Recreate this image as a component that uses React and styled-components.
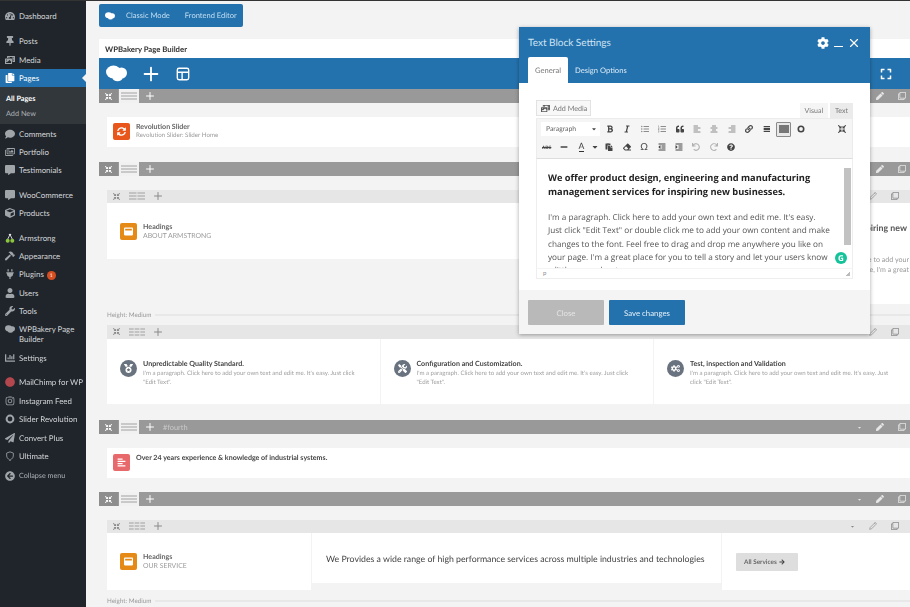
import React from "react";
import styled, { createGlobalStyle } from "styled-components";
import {
  FaTachometerAlt, FaThumbtack, FaPhotoVideo, FaCopy, FaComment, FaRegImages, FaCommentAlt,
  FaCube, FaHammer, FaPlug, FaUser, FaWrench, FaInstagram, FaPaperPlane, FaCircle,
  FaArrowCircleLeft, FaBold, FaItalic, FaListUl, FaListOl, FaQuoteLeft, FaAlignLeft,
  FaAlignCenter, FaAlignRight, FaLink, FaMinus, FaPaste, FaEraser, FaIndent,
  FaOutdent, FaUndo, FaRedo, FaQuestionCircle, FaCog, FaExpand, FaCaretDown,
  FaPen, FaRegClone, FaSyncAlt, FaMedal, FaTools, FaCogs, FaArrowRight,
  FaCompressArrowsAlt, FaWindowMaximize, FaChartBar
} from "react-icons/fa";
import { FiPlus, FiX, FiEdit2, FiShield } from "react-icons/fi";
import { MdViewDay } from "react-icons/md";

const GlobalStyle = createGlobalStyle`
  html, body { margin: 0; padding: 0; height: 607px; overflow: hidden; background: #f3f3f3; }
  body { font-family: Lato, "Open Sans", "Liberation Sans", sans-serif; color: #444; text-rendering: geometricPrecision; }
  * { box-sizing: border-box; }
`;

const Page = styled.div`
  position: relative;
  width: 910px;
  height: 607px;
  display: flex;
  overflow: hidden;
  border-top: 1px solid #333;
  filter: blur(0.25px);
`;

const Sidebar = styled.nav`
  width: 86px;
  flex: none;
  background: #20252b;
  padding-top: 5.8px;
`;

const MenuGroup = styled.div`
  margin-bottom: ${(p) => p.$mb || 6}px;
`;

const MenuItem = styled.div`
  position: relative;
  display: flex;
  align-items: ${(p) => (p.$tall ? "flex-start" : "center")};
  gap: 4px;
  min-height: ${(p) => (p.$tall ? 28.6 : 18.4)}px;
  margin-top: ${(p) => (p.$small ? 2 : 0)}px;
  padding: ${(p) => (p.$tall ? "4px 2px 0 5px" : "0 2px 0 5px")};
  font-size: ${(p) => (p.$small ? 7.2 : 7.9)}px;
  line-height: 10px;
  white-space: ${(p) => (p.$tall ? "normal" : "nowrap")};
  color: ${(p) => (p.$active ? "#fff" : p.$small ? "#aab0b5" : "#d3d6d9")};
  background: ${(p) => (p.$active ? "#2271ae" : "transparent")};
  svg { flex: none; width: 10px; height: 10px; color: ${(p) => (p.$active ? "#fff" : p.$tint || "#a0a5aa")}; }
`;

const ActiveArrow = styled.span`
  position: absolute;
  right: 0;
  top: 5px;
  border: 4.5px solid transparent;
  border-right-color: #f3f3f3;
  border-left: 0;
`;

const SubMenu = styled.div`
  height: 37px;
  background: #32373c;
  padding: 4px 6px 0;
`;

const SubItem = styled.div`
  font-size: 7.3px;
  line-height: 15px;
  font-weight: ${(p) => (p.$active ? 700 : 400)};
  color: ${(p) => (p.$active ? "#fff" : "#aab0b5")};
`;

const Badge = styled.span`
  display: inline-flex;
  align-items: center;
  justify-content: center;
  width: 9px;
  height: 9px;
  margin-left: 3px;
  border-radius: 50%;
  background: #d54e21;
  color: #fff;
  font-size: 5px;
`;

const Main = styled.main`
  flex: 1;
  min-width: 0;
  padding: 3px 0 0 13px;
`;

const ModeBar = styled.div`
  display: flex;
  align-items: center;
  width: 144px;
  height: 23px;
  padding-left: 6px;
  background: #2472ad;
  border-radius: 2px;
  color: #c4dff3;
  font-size: 7.55px;
  svg { color: #fff; width: 10px; height: 8px; margin-right: 11px; }
  span + span { margin-left: 15px; }
`;

const BuilderTitle = styled.div`
  margin-top: 12px;
  height: 19px;
  padding-left: 6px;
  display: flex;
  align-items: center;
  background: #fff;
  color: #333;
  font-size: 7.75px;
  font-weight: 700;
`;

const BuilderNav = styled.div`
  height: 31px;
  padding: 0 18px 0 7px;
  display: flex;
  align-items: center;
  background: #2472ad;
  color: #fff;
`;

const NavAdd = styled(FiPlus)`
  width: 22px;
  height: 22px;
  margin-left: 13px;
`;

const NavLayout = styled.svg`
  width: 14px;
  height: 14px;
  margin-left: 14px;
`;

const NavExpand = styled(FaExpand)`
  width: 12px;
  height: 12px;
  margin-left: auto;
`;

const Row = styled.section`
  padding-bottom: ${(p) => p.$pb}px;
`;

const RowHead = styled.div`
  height: ${(p) => (p.$inner ? 13.5 : 14)}px;
  display: flex;
  align-items: center;
  background: ${(p) => (p.$inner ? "#e6e6e6" : "#999")};
  color: ${(p) => (p.$inner ? "#8a8a8a" : "#fff")};
  font-size: 7.4px;
`;

const HeadMove = styled.span`
  width: 19px;
  height: 100%;
  display: flex;
  align-items: center;
  justify-content: center;
  background: ${(p) => (p.$inner ? "transparent" : "#8d8d8d")};
  svg { width: 7px; height: 7px; }
`;

const HeadLayout = styled.span`
  width: 20px;
  margin-left: 1px;
  height: 100%;
  display: flex;
  align-items: center;
  justify-content: center;
  background: ${(p) => (p.$inner ? "transparent" : "#f1f1f1")};
  color: #999;
`;

const LinesIcon = styled.svg`
  width: 16px;
  height: 8px;
`;

const HeadPlus = styled(FiPlus)`
  width: 12px;
  height: 12px;
  margin-left: 5px;
`;

const HeadTag = styled.span`
  margin-left: 7px;
  color: #c9c9c9;
`;

const HeadTools = styled.span`
  margin-left: auto;
  padding-right: ${(p) => (p.$inner ? 11 : 4)}px;
  display: flex;
  align-items: center;
  gap: 14px;
  color: ${(p) => (p.$inner ? "#8a8a8a" : "#e6e6e6")};
  svg { width: 8px; height: 8px; }
  svg:first-child { width: 5px; height: 5px; }
`;

const RowBody = styled.div`
  padding: 13.5px 0 0 8px;
`;

const Card = styled.div`
  display: flex;
  align-items: center;
  gap: 6px;
  height: 30px;
  padding-left: 6px;
  background: #fff;
`;

const IconTile = styled.span`
  flex: none;
  width: 17px;
  height: 17px;
  display: flex;
  align-items: center;
  justify-content: center;
  border-radius: 2px;
  background: ${(p) => p.$bg};
  color: #fff;
  svg { width: 9px; height: 9px; }
`;

const CardTitle = styled.div`
  font-size: 7.1px;
  line-height: 8.5px;
  font-weight: 700;
  white-space: nowrap;
  color: ${(p) => (p.$dark ? "#444" : "#666")};
`;

const CardSub = styled.div`
  font-size: ${(p) => p.$size || 6.2}px;
  line-height: 8.5px;
  color: #9a9a9a;
`;

const LongTitle = styled(CardTitle)`
  margin-bottom: 8px;
`;

const InnerRow = styled.div`
  margin-left: 8px;
`;

const InnerBody = styled.div`
  display: flex;
  gap: 1px;
  align-items: flex-start;
`;

const Cell = styled.div`
  width: ${(p) => p.$w}px;
  flex: ${(p) => (p.$w ? "none" : 1)};
  height: ${(p) => p.$h}px;
  background: #fff;
  display: flex;
  gap: 6px;
  padding: ${(p) => p.$pad || "20px 13px 0"};
`;

const Round = styled.span`
  flex: none;
  width: 17px;
  height: 17px;
  margin-top: 6px;
  display: flex;
  align-items: center;
  justify-content: center;
  border-radius: 50%;
  background: #69727f;
  color: #fff;
  svg { width: 9px; height: 9px; }
`;

const Feature = styled.div`
  padding-top: 6px;
  width: 213px;
`;

const FeatureText = styled.div`
  margin-top: 1px;
  font-size: 6.1px;
  line-height: 9px;
  color: #a0a0a0;
`;

const CellLead = styled.div`
  font-size: 8.75px;
  line-height: 12px;
  color: #444;
  white-space: nowrap;
`;

const HiddenCol = styled.div`
  margin-left: auto;
  padding-top: 19px;
  text-align: right;
  white-space: nowrap;
`;

const HiddenHead = styled.div`
  padding-right: 2px;
  font-size: 8.8px;
  font-weight: 700;
  color: #555;
`;

const HiddenText = styled.div`
  margin-top: 22px;
  font-size: 7.1px;
  line-height: 10px;
  color: #999;
`;

const GreyButton = styled.span`
  display: flex;
  align-items: center;
  gap: 2px;
  width: 62px;
  height: 18px;
  padding-left: 8px;
  background: #dedede;
  border-radius: 1px;
  color: #666;
  font-size: 6.4px;
  font-weight: 700;
  svg { width: 6px; height: 6px; color: #444; }
`;

const HeightBar = styled.div`
  display: flex;
  align-items: center;
  gap: 3px;
  height: 10px;
  margin-top: ${(p) => p.$mt}px;
  color: #999;
  font-size: 6.3px;
  &::after { content: ""; flex: 1; height: 2px; background: #e8e8e8; }
`;

const Modal = styled.div`
  position: absolute;
  left: 519px;
  top: 26px;
  width: 351px;
  height: 307px;
  background: #fff;
  box-shadow: 0 1px 4px rgba(0, 0, 0, 0.35);
`;

const ModalHead = styled.div`
  height: 30px;
  padding: 1px 9px 0;
  display: flex;
  align-items: center;
  background: #2472ad;
  color: #cfe3f3;
  font-size: 10px;
`;

const ModalTools = styled.div`
  margin-left: auto;
  display: flex;
  align-items: center;
  gap: 4.5px;
  color: #fff;
  svg:first-child { width: 12px; height: 12px; }
`;

const CloseIcon = styled(FiX)`
  width: 14px;
  height: 14px;
`;

const Minimize = styled.span`
  width: 9px;
  height: 1.5px;
  margin-top: 8px;
  background: #fff;
`;

const ModalTabs = styled.div`
  height: 26px;
  padding-left: 9px;
  display: flex;
  align-items: flex-end;
  background: #2472ad;
`;

const Tab = styled.div`
  width: ${(p) => (p.$active ? "40px" : "auto")};
  height: 26px;
  padding: 0 7px;
  display: flex;
  align-items: center;
  border-radius: 2px 2px 0 0;
  background: ${(p) => (p.$active ? "#fff" : "transparent")};
  color: ${(p) => (p.$active ? "#777" : "#dcebf6")};
  font-size: 7.6px;
`;

const ModalBody = styled.div`
  height: 207px;
  padding: 0 17px;
`;

const EditorTop = styled.div`
  height: 35px;
  display: flex;
  align-items: flex-end;
  justify-content: space-between;
`;

const AddMedia = styled.span`
  display: flex;
  align-items: center;
  gap: 3px;
  width: 55px;
  height: 16px;
  margin-bottom: 2px;
  padding-left: 4px;
  border: 1px solid #e2e2e2;
  background: #f8f8f8;
  color: #777;
  font-size: 7.2px;
  svg { width: 9px; height: 9px; color: #555; }
`;

const ViewTabs = styled.div`
  display: flex;
  gap: 2px;
`;

const ViewTab = styled.span`
  height: 15px;
  padding: 0 5px;
  display: flex;
  align-items: center;
  background: ${(p) => (p.$active ? "#ebebeb" : "#f5f5f5")};
  color: #777;
  font-size: 7px;
`;

const Toolbar = styled.div`
  height: 41px;
  padding: 1px 1px 0;
  background: #f5f5f5;
  border: 1px solid #ececec;
  border-bottom-color: #ddd;
`;

const ToolLine = styled.div`
  height: 18px;
  display: flex;
  align-items: center;
`;

const FormatSelect = styled.span`
  width: 59px;
  height: 14px;
  margin: 0 1.3px 0 3px;
  padding: 0 3px 0 5px;
  display: flex;
  align-items: center;
  justify-content: space-between;
  background: #fff;
  color: #666;
  font-size: 6.8px;
  svg { width: 6px; height: 6px; color: #444; }
`;

const ToolButton = styled.span`
  width: ${(p) => p.$w || 17.4}px;
  height: 15px;
  flex: none;
  display: flex;
  align-items: center;
  justify-content: center;
  font-size: 9.5px;
  color: ${(p) => (p.$muted ? "#b0b0b0" : p.$soft ? "#8c8c8c" : "#444")};
  margin-left: ${(p) => (p.$push ? "auto" : 0)};
  svg { width: 8px; height: 8px; }
`;

const PressedButton = styled.span`
  width: 15px;
  height: 15px;
  margin: 0 1.2px;
  flex: none;
  display: flex;
  align-items: center;
  justify-content: center;
  border: 1px solid #8a8a8a;
  border-radius: 1px;
  background: #e8e8e8;
  &::before { content: ""; width: 10px; height: 8px; background: #777; }
`;

const StrikeLabel = styled.span`
  font-size: 4.6px;
  font-weight: 700;
  text-decoration: line-through;
`;

const ColorA = styled.span`
  font-size: 8.6px;
  line-height: 9px;
  border-bottom: 1.5px solid #333;
`;

const RingIcon = styled.svg`
  fill: none;
  stroke: currentColor;
  stroke-width: 2;
`;

const Editor = styled.div`
  position: relative;
  height: 109px;
  padding: 12px 22px 0 11px;
  overflow: hidden;
  border-left: 1px solid #eee;
  border-right: 1px solid #eee;
  background: #fff;
  font-family: "Open Sans", "Liberation Sans", sans-serif;
`;

const EditorLead = styled.div`
  font-size: 9.25px;
  line-height: 13.5px;
  font-weight: 700;
  color: #222;
`;

const EditorText = styled.div`
  margin-top: 13px;
  font-size: 8.2px;
  line-height: 13.3px;
  color: #555;
`;

const ScrollThumb = styled.span`
  position: absolute;
  right: 1px;
  top: 9px;
  width: 7px;
  height: 77px;
  background: #c2c2c2;
`;

const Grammarly = styled.span`
  position: absolute;
  right: 5px;
  top: 93px;
  width: 12px;
  height: 12px;
  display: flex;
  align-items: center;
  justify-content: center;
  border-radius: 50%;
  background: #15c39a;
  color: #fff;
  font-size: 8px;
  font-weight: 700;
`;

const PathBar = styled.div`
  position: relative;
  height: 11px;
  padding: 0 6px;
  display: flex;
  align-items: center;
  border: 1px solid #eee;
  border-top-color: #f4f4f4;
  background: #fff;
  color: #888;
  font-size: 6px;
  &::after {
    content: "";
    position: absolute;
    right: 2px;
    bottom: 2px;
    width: 5px;
    height: 5px;
    background: linear-gradient(135deg, transparent 50%, #bbb 50%);
  }
`;

const ModalFoot = styled.div`
  height: 44px;
  padding: 10px 9px 0;
  display: flex;
  gap: 5px;
  align-items: flex-start;
  background: #f4f4f4;
`;

const FootButton = styled.span`
  width: 76px;
  height: 25px;
  display: flex;
  align-items: center;
  justify-content: center;
  border-radius: 1px;
  background: ${(p) => (p.$primary ? "#2472ad" : "#b9b9b9")};
  color: ${(p) => (p.$primary ? "#e6f1f9" : "#e5e5e5")};
  font-size: 7.8px;
`;

const Cherry = styled.svg`
  flex: none;
  width: 12px;
  height: 13px;
`;

const CloudSvg = styled.svg`
  flex: none;
  width: ${(p) => p.$w || 21}px;
  height: ${(p) => p.$h || 17}px;
  fill: currentColor;
`;

// the two lobed WPBakery logo
const BakeryCloud = ({ w, h }) => (
  <CloudSvg $w={w} $h={h} viewBox="0 0 21 17">
    <ellipse cx="7.5" cy="7" rx="7.5" ry="6.5" />
    <ellipse cx="15.5" cy="8" rx="5.5" ry="5.5" />
    <ellipse cx="11.5" cy="13" rx="5" ry="3.2" />
  </CloudSvg>
);

const Ring = () => (
  <RingIcon viewBox="0 0 10 10">
    <circle cx="5" cy="5" r="3.4" />
  </RingIcon>
);

const menuAfterPages = [
  [
    { icon: <FaComment />, label: "Comments" },
    { icon: <FaRegImages />, label: "Portfolio" },
    { icon: <FaCommentAlt />, label: "Testimonials" },
  ],
  [
    { icon: <FaCommentAlt />, label: "WooCommerce" },
    { icon: <FaCube />, label: "Products" },
  ],
  [
    { cherry: true, label: "Armstrong" },
    { icon: <FaHammer />, label: "Appearance" },
    { icon: <FaPlug />, label: "Plugins", badge: 1 },
    { icon: <FaUser />, label: "Users" },
    { icon: <FaWrench />, label: "Tools" },
    { icon: <BakeryCloud />, label: "WPBakery Page Builder", tall: true },
    { icon: <FaChartBar />, label: "Settings" },
  ],
  [
    { icon: <FaCircle />, label: "MailChimp for WP", tint: "#b4474d" },
    { icon: <FaInstagram />, label: "Instagram Feed" },
    { icon: <Ring />, label: "Slider Revolution" },
    { icon: <FaPaperPlane />, label: "Convert Plus" },
    { icon: <FiShield />, label: "Ultimate" },
    { icon: <FaArrowCircleLeft />, label: "Collapse menu", small: true },
  ],
];

const features = [
  { icon: <FaMedal />, title: "Unpredictable Quality Standard." },
  { icon: <FaTools />, title: "Configuration and Customization." },
  { icon: <FaCogs />, title: "Test, inspection and Validation" },
];

const firstLine = [
  [FaBold], [FaItalic], [FaListUl, true], [FaListOl, true], [FaQuoteLeft],
  [FaAlignLeft, true], [FaAlignCenter, true], [FaAlignRight, true], [FaLink], [MdViewDay],
];

const MenuRow = ({ item }) => (
  <MenuItem $tall={item.tall} $tint={item.tint} $small={item.small}>
    {item.cherry ? (
      <Cherry viewBox="0 0 12 13">
        <path d="M3 8 L6 2 L9 8" fill="none" stroke="#fff" strokeWidth="1" />
        <path d="M4 2 Q6 0 8 2 Q6 3 4 2" fill="#fff" />
        <circle cx="3" cy="10" r="2.6" fill="#8cc63f" />
        <circle cx="9" cy="10" r="2.6" fill="#8cc63f" />
      </Cherry>
    ) : (
      item.icon
    )}
    <span>
      {item.label}
      {item.badge && <Badge>{item.badge}</Badge>}
    </span>
  </MenuItem>
);

// row layout glyph: three lines, split in as many columns as the row has
const Lines = ({ cols }) => {
  const w = cols === 1 ? 16 : (16 - (cols - 1)) / cols;
  return (
    <LinesIcon viewBox="0 0 16 8" stroke="currentColor" strokeWidth="0.9">
      {Array.from({ length: cols }).map((_, i) =>
        [1, 4, 7].map((y) => (
          <line key={`${i}-${y}`} x1={i * (w + 1)} x2={i * (w + 1) + w} y1={y} y2={y} />
        ))
      )}
    </LinesIcon>
  );
};

const RowHeader = ({ inner, tag, cols = 1 }) => (
  <RowHead $inner={inner}>
    <HeadMove $inner={inner}><FaCompressArrowsAlt /></HeadMove>
    <HeadLayout $inner={inner}><Lines cols={cols} /></HeadLayout>
    <HeadPlus />
    {tag && <HeadTag>{tag}</HeadTag>}
    <HeadTools $inner={inner}>
      <FaCaretDown />
      {inner ? <FiEdit2 /> : <FaPen />}
      <FaRegClone />
    </HeadTools>
  </RowHead>
);

const App = () => (
  <>
    <GlobalStyle />
    <Page>
      <Sidebar>
        <MenuGroup $mb={7}>
          <MenuRow item={{ icon: <FaTachometerAlt />, label: "Dashboard" }} />
        </MenuGroup>
        <MenuRow item={{ icon: <FaThumbtack />, label: "Posts" }} />
        <MenuRow item={{ icon: <FaPhotoVideo />, label: "Media" }} />
        <MenuItem $active>
          <FaCopy />
          <span>Pages</span>
          <ActiveArrow />
        </MenuItem>
        <SubMenu>
          <SubItem $active>All Pages</SubItem>
          <SubItem>Add New</SubItem>
        </SubMenu>
        {menuAfterPages.map((group, i) => (
          <MenuGroup key={i}>
            {group.map((item) => <MenuRow key={item.label} item={item} />)}
          </MenuGroup>
        ))}
      </Sidebar>

      <Main>
        <ModeBar>
          <BakeryCloud w={10} h={8} />
          <span>Classic Mode</span>
          <span>Frontend Editor</span>
        </ModeBar>
        <BuilderTitle>WPBakery Page Builder</BuilderTitle>
        <BuilderNav>
          <BakeryCloud />
          <NavAdd />
          <NavLayout viewBox="0 0 16 16" fill="none" stroke="#fff" strokeWidth="1.6">
            <rect x="1.5" y="1.5" width="13" height="13" rx="2" />
            <path d="M1.5 6h13M7 6v8.5" />
          </NavLayout>
          <NavExpand />
        </BuilderNav>

        <Row $pb={15.5}>
          <RowHeader />
          <RowBody>
            <Card>
              <IconTile $bg="#e8561b"><FaSyncAlt /></IconTile>
              <div>
                <CardTitle>Revolution Slider</CardTitle>
                <CardSub>Revolution Slider: Slider Home</CardSub>
              </div>
            </Card>
          </RowBody>
        </Row>

        <Row $pb={5}>
          <RowHeader />
          <RowBody>
            <RowHeader inner cols={2} />
            <InnerBody>
              <Cell $w={500} $h={55.5}>
                <IconTile $bg="#e58a17"><FaWindowMaximize /></IconTile>
                <div>
                  <CardTitle>Headings</CardTitle>
                  <CardSub $size={6.9}>ABOUT ARMSTRONG</CardSub>
                </div>
              </Cell>
              <Cell $h={100.5} $pad="0 1px 0 0">
                <HiddenCol>
                  <HiddenHead>management services for inspiring new</HiddenHead>
                  <HiddenText>
                    Click here to add your<br />
                    drag and drop me, I'm a great
                  </HiddenText>
                </HiddenCol>
              </Cell>
            </InnerBody>
            <HeightBar $mt={6.5}>Height: Medium</HeightBar>
          </RowBody>
        </Row>

        <Row $pb={16}>
          <InnerRow>
            <RowHeader inner cols={3} />
            <InnerBody>
              {features.map((f, i) => (
                <Cell key={f.title} $w={i === 2 ? 256 : 272.5} $h={65.5} $pad="15px 13px 0">
                  <Round>{f.icon}</Round>
                  <Feature>
                    <CardTitle $dark>{f.title}</CardTitle>
                    <FeatureText>
                      I'm a paragraph. Click here to add your own text and edit me. It's easy. Just click "Edit Text".
                    </FeatureText>
                  </Feature>
                </Cell>
              ))}
            </InnerBody>
          </InnerRow>
        </Row>

        <Row $pb={14.5}>
          <RowHeader tag="#fourth" />
          <RowBody>
            <Card>
              <IconTile $bg="#e8696b"><FaAlignLeft /></IconTile>
              <LongTitle $dark>Over 24 years experience &amp; knowledge of industrial systems.</LongTitle>
            </Card>
          </RowBody>
        </Row>

        <Row $pb={0}>
          <RowHeader />
          <RowBody>
            <RowHeader inner cols={3} />
            <InnerBody>
              <Cell $w={204} $h={57}>
                <IconTile $bg="#e58a17"><FaWindowMaximize /></IconTile>
                <div>
                  <CardTitle>Headings</CardTitle>
                  <CardSub $size={6.9}>OUR SERVICE</CardSub>
                </div>
              </Cell>
              <Cell $w={409} $h={50} $pad="20px 14px 0">
                <CellLead>We Provides a wide range of high performance services across multiple industries and technologies</CellLead>
              </Cell>
              <Cell $h={57} $pad="20px 14px 0">
                <GreyButton>All Services <FaArrowRight /></GreyButton>
              </Cell>
            </InnerBody>
            <HeightBar $mt={6}>Height: Medium</HeightBar>
          </RowBody>
        </Row>
      </Main>

      <Modal>
        <ModalHead>
          Text Block Settings
          <ModalTools>
            <FaCog />
            <Minimize />
            <CloseIcon />
          </ModalTools>
        </ModalHead>
        <ModalTabs>
          <Tab $active>General</Tab>
          <Tab>Design Options</Tab>
        </ModalTabs>
        <ModalBody>
          <EditorTop>
            <AddMedia><FaPhotoVideo /> Add Media</AddMedia>
            <ViewTabs>
              <ViewTab>Visual</ViewTab>
              <ViewTab $active>Text</ViewTab>
            </ViewTabs>
          </EditorTop>
          <Toolbar>
            <ToolLine>
              <FormatSelect>Paragraph <FaCaretDown /></FormatSelect>
              {firstLine.map(([Icon, soft], i) => (
                <ToolButton key={i} $soft={soft}><Icon /></ToolButton>
              ))}
              <PressedButton />
              <ToolButton><Ring /></ToolButton>
              <ToolButton $push><FaCompressArrowsAlt /></ToolButton>
            </ToolLine>
            <ToolLine>
              <ToolButton><StrikeLabel>ABC</StrikeLabel></ToolButton>
              <ToolButton><FaMinus /></ToolButton>
              <ToolButton><ColorA>A</ColorA></ToolButton>
              <ToolButton $w={10.5}><FaCaretDown /></ToolButton>
              <ToolButton><FaPaste /></ToolButton>
              <ToolButton><FaEraser /></ToolButton>
              <ToolButton>Ω</ToolButton>
              <ToolButton><FaOutdent /></ToolButton>
              <ToolButton><FaIndent /></ToolButton>
              <ToolButton $muted><FaUndo /></ToolButton>
              <ToolButton $muted><FaRedo /></ToolButton>
              <ToolButton><FaQuestionCircle /></ToolButton>
            </ToolLine>
          </Toolbar>
          <Editor>
            <EditorLead>We offer product design, engineering and manufacturing management services for inspiring new businesses.</EditorLead>
            <EditorText>
              I'm a paragraph. Click here to add your own text and edit me. It's easy. Just click "Edit Text" or double click me to add your own content and make changes to the font. Feel free to drag and drop me anywhere you like on your page. I'm a great place for you to tell a story and let your users know a little more about you.
            </EditorText>
            <ScrollThumb />
            <Grammarly>G</Grammarly>
          </Editor>
          <PathBar>p</PathBar>
        </ModalBody>
        <ModalFoot>
          <FootButton>Close</FootButton>
          <FootButton $primary>Save changes</FootButton>
        </ModalFoot>
      </Modal>
    </Page>
  </>
);

export default App;
